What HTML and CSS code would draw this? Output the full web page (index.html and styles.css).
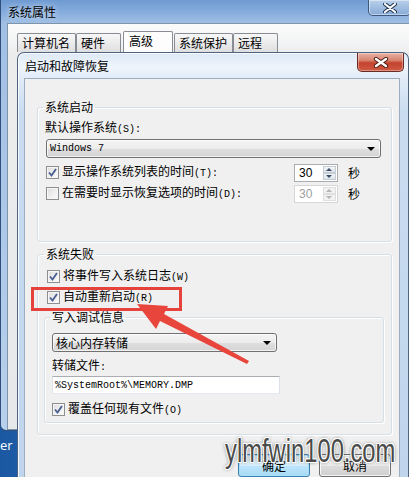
FILE: index.html
```html
<!DOCTYPE html>
<html lang="zh-CN">
<head>
<meta charset="utf-8">
<title>启动和故障恢复</title>
<link rel="stylesheet" href="styles.css">
</head>
<body>
<div class="screen">
  <div class="outer">
    <div class="outer-title">
      <span class="outer-caption">系统属性</span>
      <span class="outer-close"><svg width="14" height="10" viewBox="0 0 14 10"><path d="M2 1 L12 9 M12 1 L2 9" stroke="#1d2f48" stroke-width="4" stroke-linecap="round"/><path d="M2 1 L12 9 M12 1 L2 9" stroke="#fff" stroke-width="2.2" stroke-linecap="round"/></svg></span>
    </div>
    <div class="outer-body">
      <div class="tabs">
        <span class="tab">计算机名</span>
        <span class="tab">硬件</span>
        <span class="tab active">高级</span>
        <span class="tab">系统保护</span>
        <span class="tab">远程</span>
      </div>
    </div>
  </div>

  <div class="desk-label">er</div>

  <div class="dialog">
    <div class="dlg-title">
      <span class="dlg-caption">启动和故障恢复</span>
      <span class="dlg-close"><svg width="16" height="11" viewBox="0 0 16 11"><path d="M3 2 L13 9 M13 2 L3 9" stroke="#4a1a12" stroke-width="4.2" stroke-linecap="round"/><path d="M3 2 L13 9 M13 2 L3 9" stroke="#fff" stroke-width="2.4" stroke-linecap="round"/></svg></span>
    </div>
    <div class="dlg-client">
      <fieldset class="group g-start">
        <legend>系统启动</legend>
        <div class="label">默认操作系统<span class="k">(S):</span></div>
        <div class="combo combo-os"><span class="mono">Windows 7</span><span class="arrow"></span></div>
        <div class="row row-first">
          <span class="chk"><svg width="11" height="11" viewBox="0 0 11 11"><path d="M2 5.5 L4.5 8.5 L9 2" fill="none" stroke="#4b5f92" stroke-width="1.9"/></svg></span>
          <span class="text">显示操作系统列表的时间<span class="k">(T):</span></span>
          <span class="spin"><span class="val">30</span><span class="btns"><span class="up"></span><span class="down"></span></span></span>
          <span class="unit">秒</span>
        </div>
        <div class="row">
          <span class="chk"></span>
          <span class="text">在需要时显示恢复选项的时间<span class="k">(D):</span></span>
          <span class="spin off"><span class="val">30</span><span class="btns"><span class="up"></span><span class="down"></span></span></span>
          <span class="unit">秒</span>
        </div>
      </fieldset>

      <fieldset class="group g-fail">
        <legend>系统失败</legend>
        <div class="row row-top">
          <span class="chk"><svg width="11" height="11" viewBox="0 0 11 11"><path d="M2 5.5 L4.5 8.5 L9 2" fill="none" stroke="#4b5f92" stroke-width="1.9"/></svg></span>
          <span class="text">将事件写入系统日志<span class="k">(W)</span></span>
        </div>
        <div class="row">
          <span class="chk"><svg width="11" height="11" viewBox="0 0 11 11"><path d="M2 5.5 L4.5 8.5 L9 2" fill="none" stroke="#4b5f92" stroke-width="1.9"/></svg></span>
          <span class="text">自动重新启动<span class="k">(R)</span></span>
        </div>

        <fieldset class="group g-debug">
          <legend>写入调试信息</legend>
          <div class="combo combo-dump"><span>核心内存转储</span><span class="arrow"></span></div>
          <div class="label label-file">转储文件<span class="k">:</span></div>
          <div class="input"><span class="mono">%SystemRoot%\MEMORY.DMP</span></div>
          <div class="row row-over">
            <span class="chk"><svg width="11" height="11" viewBox="0 0 11 11"><path d="M2 5.5 L4.5 8.5 L9 2" fill="none" stroke="#4b5f92" stroke-width="1.9"/></svg></span>
            <span class="text">覆盖任何现有文件<span class="k">(O)</span></span>
          </div>
        </fieldset>
      </fieldset>

      <div class="buttons">
        <span class="btn default">确定</span>
        <span class="btn">取消</span>
      </div>
    </div>
  </div>

  <svg class="annot" width="409" height="477" viewBox="0 0 409 477">
    <rect x="32.5" y="288.5" width="148" height="21" fill="none" stroke="#e5423b" stroke-width="3"/>
    <polygon points="137,304 168,306 164,314 249,361 247,364 160,321 156,329" fill="#e8453d"/>
  </svg>

  <div class="watermark">ylmfwin100.com</div>
</div>
</body>
</html>
```

FILE: styles.css
```css
* { box-sizing: border-box; }

html, body {
  margin: 0;
  padding: 0;
}

body {
  width: 409px;
  height: 477px;
  overflow: hidden;
  font-family: "Noto Sans CJK SC", "Noto Sans", sans-serif;
  font-size: 12px;
  color: #000;
  background: #2a6cb8;
}

.screen {
  position: relative;
  width: 409px;
  height: 477px;
  overflow: hidden;
  background: linear-gradient(90deg, #1c58a2 0%, #2f7bd0 50%, #2468b8 100%);
}

/* ---------- outer window (系统属性) ---------- */
.outer {
  position: absolute;
  left: 0;
  top: 0;
  width: 411px;
  height: 431px;
  display: flex;
  flex-direction: column;
  border-left: 1px solid #2e4f7a;
  border-bottom: 1px solid #2e4f7a;
  border-radius: 0 0 0 6px;
  background: linear-gradient(180deg, #6f9bd2 0%, #85acdc 12px, #a2c0e5 24px, #b7d0ec 100%);
}

.outer-title {
  height: 23px;
  flex: none;
  display: flex;
  justify-content: space-between;
  align-items: flex-start;
  padding-left: 7px;
}

.outer-caption {
  line-height: 23px;
  font-size: 12px;
  color: #000;
  text-shadow: 0 0 6px rgba(255, 255, 255, 0.8);
}

.outer-close {
  width: 43px;
  height: 16px;
  display: flex;
  align-items: center;
  justify-content: center;
  border: 1px solid #3d5a80;
  border-top: 0;
  border-radius: 0 0 5px 5px;
  background: linear-gradient(180deg, #b9d0ea 0%, #9fbde0 50%, #88aad6 100%);
  box-shadow: inset 0 0 0 1px rgba(255, 255, 255, 0.45);
}

.outer-body {
  flex: 1;
  margin-left: 6px;
  border: 1px solid #7f93ab;
  border-right: 0;
  background: linear-gradient(180deg, #fbfbfb 0%, #f2f3f4 20px, #ececec 30px, #e6e8ea 100%);
  padding: 9px 0 0 9px;
}

.tabs {
  display: flex;
  align-items: flex-end;
  height: 19px;
}

.tab {
  height: 19px;
  min-width: 45px;
  padding: 0 5px 0 4px;
  border: 1px solid #898c95;
  border-bottom: 0;
  border-radius: 2px 2px 0 0;
  background: linear-gradient(180deg, #f7f7f7 0%, #ececec 50%, #dedede 100%);
  line-height: 18px;
  font-size: 12px;
  white-space: nowrap;
}

.tab.active {
  height: 21px;
  min-width: 50px;
  margin: 0 1px 0 2px;
  padding-left: 5px;
  background: #fdfdfd;
  line-height: 17px;
}

.desk-label {
  position: absolute;
  left: 0;
  top: 437px;
  font-family: "Open Sans", "Liberation Sans", sans-serif;
  font-size: 13px;
  line-height: 16px;
  color: #fff;
}

/* ---------- dialog (启动和故障恢复) ---------- */
.dialog {
  position: absolute;
  left: 17px;
  top: 52px;
  width: 392px;
  height: 440px;
  display: flex;
  flex-direction: column;
  border: 1px solid #4e6481;
  border-bottom: 0;
  border-radius: 7px 7px 0 0;
  background: linear-gradient(180deg, #dde9f6 0%, #eef4fb 14px, #e2ecf7 25px, #c9dcf0 60px, #c0d5ec 100%);
  box-shadow: inset 1px 1px 0 rgba(255, 255, 255, 0.8);
}

.dlg-title {
  height: 25px;
  flex: none;
  display: flex;
  justify-content: space-between;
  align-items: flex-start;
  padding-left: 7px;
}

.dlg-caption {
  line-height: 26px;
  font-size: 12px;
}

.dlg-close {
  width: 47px;
  height: 19px;
  margin-right: 4px;
  display: flex;
  align-items: center;
  justify-content: center;
  border: 1px solid #6b2a22;
  border-top: 0;
  border-radius: 0 0 5px 5px;
  background: linear-gradient(180deg, #e8b1a4 0%, #d98670 40%, #c4432f 55%, #cf5a42 100%);
  box-shadow: inset 0 0 0 1px rgba(255, 255, 255, 0.35);
}

.dlg-client {
  flex: 1;
  margin: 0 8px 0 6px;
  border: 1px solid #9cadc2;
  border-bottom: 0;
  background: #f0f0f0;
  padding: 0 7px 0 12px;
}

/* ---------- group boxes ---------- */
.group {
  min-width: 0;
  border: 1px solid #d5dfe5;
  border-radius: 3px;
  box-shadow: inset 1px 1px 0 #fff, 1px 1px 0 #fff;
}

.group legend {
  margin-left: -2px;
  padding: 0 2px;
  line-height: 16px;
  font-size: 12px;
}

.g-start {
  margin: 20px 0 0;
  padding: 4px 10px 38px 7px;
}

.g-fail {
  margin: 4px 0 0;
  padding: 5px 7px 11px 8px;
}

.g-debug {
  margin: 2px 0 0 -2px;
  padding: 8px 7px 3px 7px;
}

.label {
  line-height: 16px;
  white-space: nowrap;
}

.k {
  font-family: "Liberation Mono", "DejaVu Sans Mono", monospace;
  font-size: 10px;
}

.mono {
  font-family: "Liberation Mono", "DejaVu Sans Mono", monospace;
  font-size: 10px;
}

/* ---------- combos ---------- */
.combo {
  height: 19px;
  display: flex;
  align-items: center;
  justify-content: space-between;
  border: 1px solid #707070;
  border-radius: 3px;
  background: linear-gradient(180deg, #f4f4f4 0%, #ececec 50%, #dfdfdf 51%, #d4d4d4 100%);
  box-shadow: inset 0 0 0 1px rgba(255, 255, 255, 0.7);
  padding: 0 5px 0 3px;
  white-space: nowrap;
}

.combo-os {
  margin: 1px 0 0 1px;
}

.combo-dump {
  width: 225px;
  font-size: 12px;
}

.arrow {
  width: 0;
  height: 0;
  border-left: 4px solid transparent;
  border-right: 4px solid transparent;
  border-top: 4px solid #000;
}

/* ---------- rows & checkboxes ---------- */
.row {
  height: 19px;
  display: flex;
  align-items: center;
  margin-top: 2px;
  margin-left: 1px;
  white-space: nowrap;
}

.row-first {
  margin-top: 5px;
}

.row-top {
  margin-top: 0;
}

.chk {
  width: 13px;
  height: 13px;
  flex: none;
  display: flex;
  align-items: center;
  justify-content: center;
  border: 1px solid #8e8f8f;
  background: linear-gradient(135deg, #dcdcdc 0%, #f1f1f1 60%, #fbfbfb 100%);
  box-shadow: inset 0 0 0 1px #f6f6f6;
}

.text {
  flex: 1;
  margin-left: 3px;
  line-height: 16px;
}

.spin {
  width: 44px;
  height: 18px;
  flex: none;
  display: flex;
  border: 1px solid #abadb3;
  background: #fff;
}

.spin .val {
  flex: 1;
  padding-left: 4px;
  font-family: "Liberation Sans", sans-serif;
  font-size: 12px;
  line-height: 16px;
}

.spin .btns {
  width: 15px;
  display: flex;
  flex-direction: column;
  padding: 1px;
}

.spin .up,
.spin .down {
  flex: 1;
  display: flex;
  align-items: center;
  justify-content: center;
  border: 1px solid #c6ccd4;
  background: linear-gradient(180deg, #f3f6f9, #dce3ea);
}

.spin .up::after {
  content: "";
  border-left: 3px solid transparent;
  border-right: 3px solid transparent;
  border-bottom: 3px solid #3b4e66;
}

.spin .down::after {
  content: "";
  border-left: 3px solid transparent;
  border-right: 3px solid transparent;
  border-top: 3px solid #3b4e66;
}

.spin.off {
  border-color: #d6d6d6;
}

.spin.off .val {
  color: #a0a0a0;
}

.spin.off .up,
.spin.off .down {
  border-color: #e0e0e0;
  background: #f2f2f2;
}

.spin.off .up::after {
  border-bottom-color: #b4b4b4;
}

.spin.off .down::after {
  border-top-color: #b4b4b4;
}

.unit {
  margin: 0 21px 0 10px;
  line-height: 16px;
}

/* ---------- dump file ---------- */
.label-file {
  margin-top: 5px;
}

.input {
  width: 228px;
  height: 18px;
  margin-top: 0;
  display: flex;
  align-items: center;
  padding-left: 2px;
  border: 1px solid #abadb3;
  border-left-color: #e2e3ea;
  border-right-color: #dbdfe6;
  border-bottom-color: #e3e9ef;
  background: #fff;
}

.row-over {
  margin: 6px 0 0 0;
}

/* ---------- buttons ---------- */
.buttons {
  display: flex;
  justify-content: flex-end;
  gap: 9px;
  margin: 19px 1px 0 0;
}

.btn {
  width: 72px;
  height: 23px;
  display: flex;
  align-items: center;
  justify-content: center;
  border: 1px solid #707070;
  border-radius: 3px;
  background: linear-gradient(180deg, #f2f2f2 0%, #ebebeb 50%, #dddddd 51%, #cfcfcf 100%);
  box-shadow: inset 0 0 0 1px rgba(255, 255, 255, 0.8);
}

.btn.default {
  border-color: #3c7fb1;
  background: linear-gradient(180deg, #eaf6fd 0%, #d9f0fc 50%, #bee6fd 51%, #a7d9f5 100%);
  box-shadow: inset 0 0 0 1px #a8e0f8;
}

/* ---------- overlays ---------- */
.annot {
  position: absolute;
  left: 0;
  top: 0;
  pointer-events: none;
}

.watermark {
  position: absolute;
  left: 225px;
  top: 434px;
  font-family: "Liberation Sans", sans-serif;
  font-size: 33px;
  line-height: 33px;
  color: #4a4a4a;
  transform: scaleX(0.72);
  transform-origin: 0 0;
  white-space: nowrap;
  text-shadow:
    1px 0 0 #fff, -1px 0 0 #fff, 0 1px 0 #fff, 0 -1px 0 #fff,
    1px 1px 0 #fff, -1px -1px 0 #fff, 1px -1px 0 #fff, -1px 1px 0 #fff,
    0 0 3px #8a8a8a, 0 0 5px rgba(0, 0, 0, 0.5);
}
```
